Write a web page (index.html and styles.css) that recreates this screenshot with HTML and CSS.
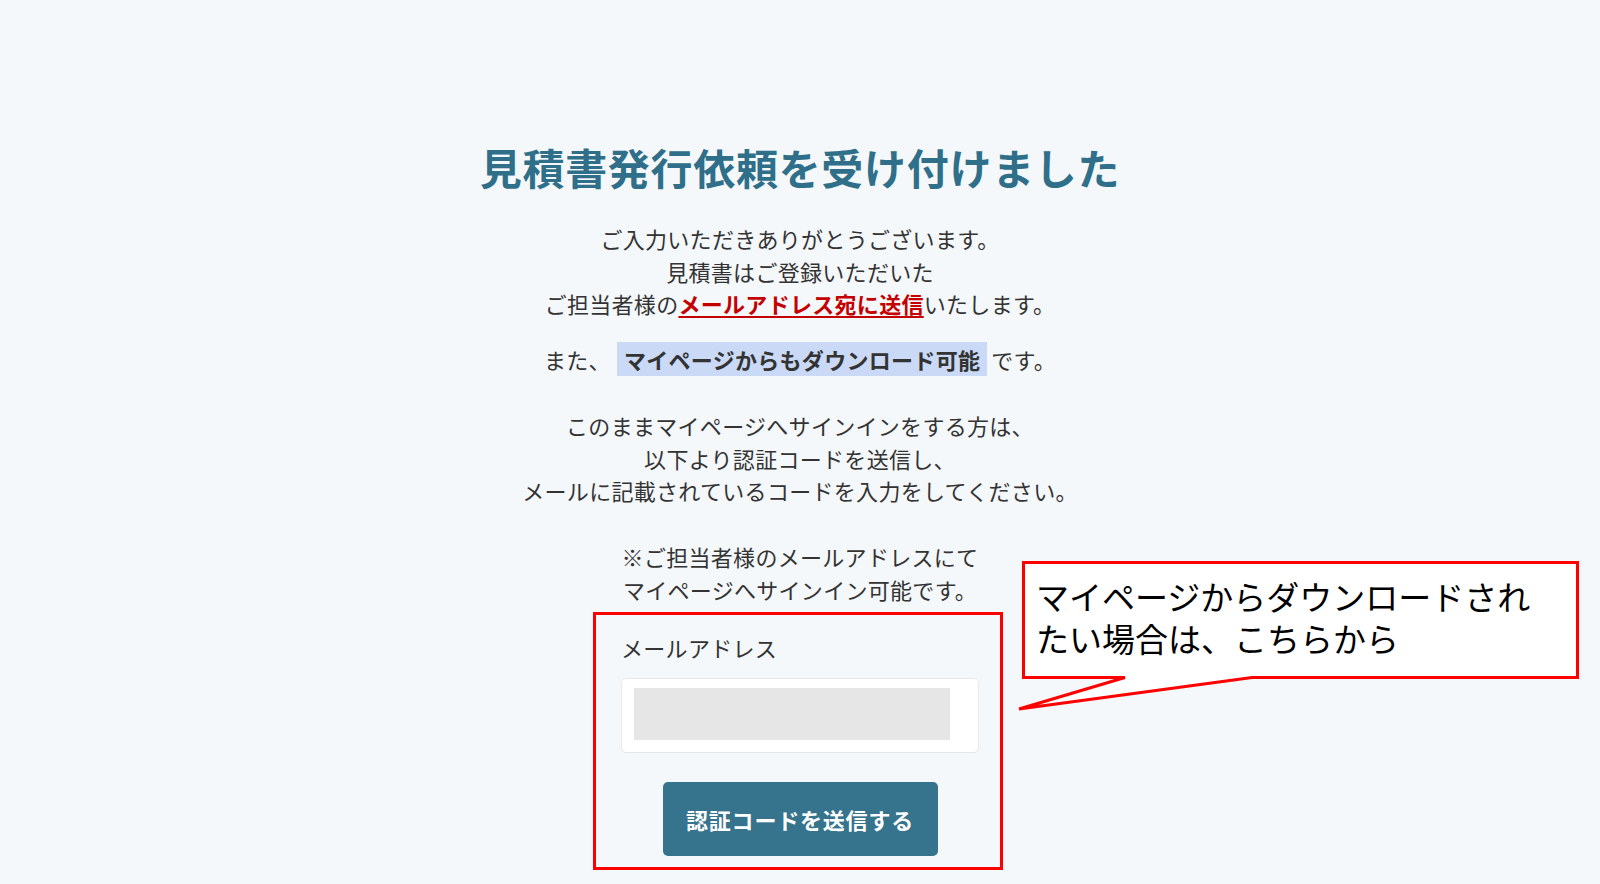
FILE: index.html
```html
<!DOCTYPE html>
<html lang="ja">
<head>
<meta charset="utf-8">
<title>見積書発行依頼を受け付けました</title>
<link rel="stylesheet" href="styles.css">
</head>
<body>
<main class="page">
  <h1 class="title">見積書発行依頼を受け付けました</h1>
  <p class="msg msg-first">ご入力いただきありがとうございます。<br>見積書はご登録いただいた<br>ご担当者様の<a class="red-link" href="#">メールアドレス宛に送信</a>いたします。</p>
  <p class="msg msg-also">また、<span class="mark">マイページからもダウンロード可能</span>です。</p>
  <p class="msg msg-gap">このままマイページへサインインをする方は、<br>以下より認証コードを送信し、<br>メールに記載されているコードを入力をしてください。</p>
  <p class="msg msg-gap">※ご担当者様のメールアドレスにて<br>マイページへサインイン可能です。</p>
  <form class="form" onsubmit="return false;">
    <label class="label">メールアドレス</label>
    <div class="input"><div class="redact"></div></div>
    <div class="btn-row"><button class="btn" type="button">認証コードを送信する</button></div>
  </form>
</main>
<div class="annot-box"></div>
<svg class="callout-shape" width="1600" height="884" viewBox="0 0 1600 884" aria-hidden="true">
  <path d="M1023.5 562.5 H1577.5 V677.5 H1252 L1019 709 L1125 677.5 H1023.5 Z" fill="#ffffff" stroke="#ff0000" stroke-width="3" stroke-miterlimit="3"/>
</svg>
<div class="callout-text"><div class="callout-line">マイページからダウンロードされ</div><div class="callout-line">たい場合は、こちらから</div></div>
</body>
</html>
```
FILE: styles.css
```css
html, body {
  margin: 0;
  padding: 0;
}
body {
  background: #f5f8fa;
  font-family: "Noto Sans CJK JP", "Noto Sans", sans-serif;
  color: #333333;
  width: 1600px;
  height: 884px;
  overflow: hidden;
  position: relative;
}
.page {
  padding-top: 139px;
  display: flex;
  flex-direction: column;
  align-items: center;
  text-align: center;
}
.title {
  margin: 0 0 27px;
  font-size: 42px;
  line-height: 56px;
  font-weight: 700;
  color: #2f6f8a;
  letter-spacing: 0.7px;
}
.msg {
  margin: 0;
  font-size: 22px;
  line-height: 32.5px;
  letter-spacing: 0.3px;
}
.msg-also {
  margin-top: 23.5px;
}
.msg-gap {
  margin-top: 33.5px;
}
.red-link {
  color: #c40000;
  font-weight: 700;
  text-decoration: underline;
  text-decoration-thickness: 2px;
  text-underline-offset: 3px;
}
.mark {
  background: #c9d9f6;
  font-weight: 700;
  padding: 1px 7px;
  margin: 0 4px 0 6px;
}
.form {
  width: 358px;
  margin-top: 26px;
  display: flex;
  flex-direction: column;
  text-align: left;
}
.label {
  font-size: 22px;
  line-height: 32.5px;
  letter-spacing: 0.3px;
}
.input {
  margin-top: 14.5px;
  height: 75px;
  box-sizing: border-box;
  background: #ffffff;
  border: 1px solid #e6e9ec;
  border-radius: 5px;
  padding: 9px 0 0 12px;
}
.redact {
  width: 316px;
  height: 52px;
  background: #e6e6e6;
}
.btn-row {
  display: flex;
  justify-content: center;
  margin-top: 29px;
}
.btn {
  width: 275px;
  height: 74px;
  border: none;
  border-radius: 5px;
  background: #36738d;
  color: #ffffff;
  font-family: "Noto Sans CJK JP", "Noto Sans", sans-serif;
  font-size: 22px;
  font-weight: 700;
  letter-spacing: 0.8px;
}
.annot-box {
  position: absolute;
  left: 593px;
  top: 612px;
  width: 410px;
  height: 258px;
  box-sizing: border-box;
  border: 3px solid #ff0000;
}
.callout-shape {
  position: absolute;
  left: 0;
  top: 0;
  pointer-events: none;
}
.callout-text {
  position: absolute;
  left: 1036px;
  top: 578px;
  font-family: "Liberation Sans", "Noto Sans CJK JP", sans-serif;
  font-size: 33px;
  line-height: 41.5px;
  color: #000000;
  font-weight: 400;
  white-space: nowrap;
}
```
